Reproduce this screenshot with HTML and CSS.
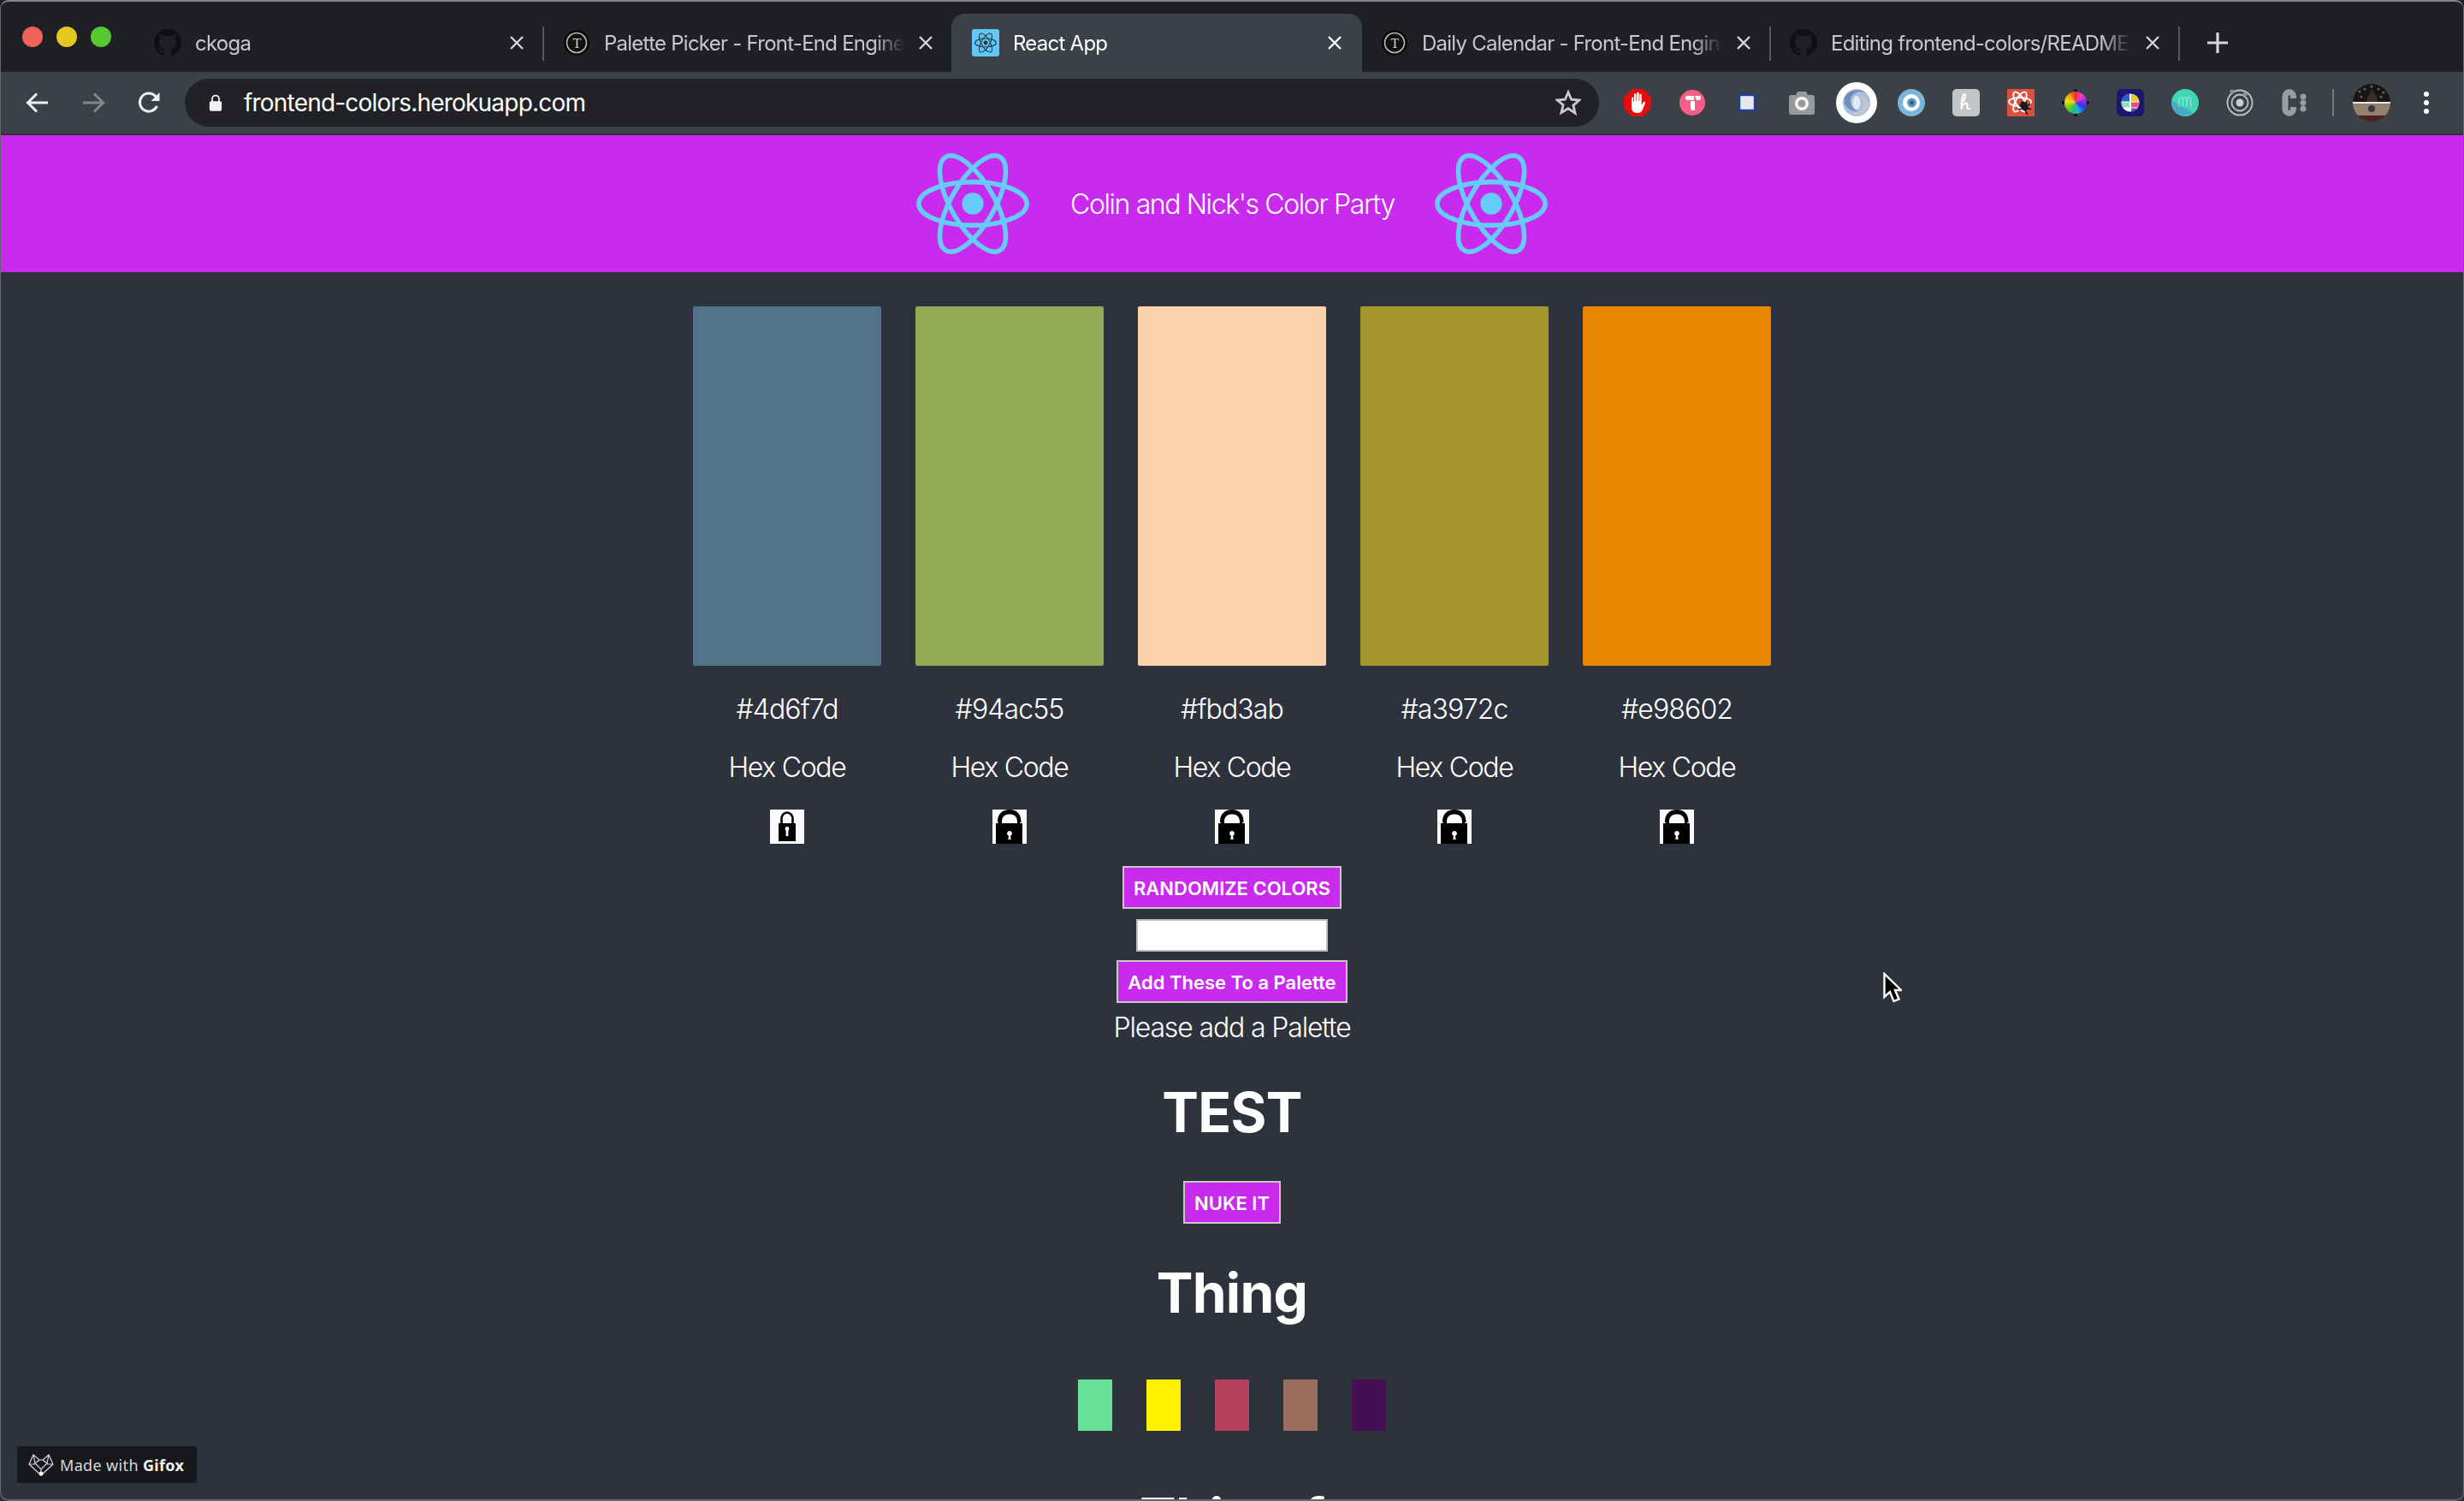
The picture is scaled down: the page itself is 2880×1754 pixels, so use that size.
FILE: index.html
```html
<!DOCTYPE html>
<html lang="en">
<head>
<meta charset="utf-8">
<title>React App</title>
<link rel="stylesheet" href="styles.css">
</head>
<body>
<svg class="defs" width="0" height="0" aria-hidden="true">
  <defs>
    <symbol id="react" viewBox="0 0 130 121">
      <g fill="none" stroke="currentColor" stroke-width="5.500">
        <ellipse cx="65" cy="60.500" rx="62.200" ry="25"/>
        <ellipse cx="65" cy="60.500" rx="62.200" ry="25" transform="rotate(60 65 60.500)"/>
        <ellipse cx="65" cy="60.500" rx="62.200" ry="25" transform="rotate(120 65 60.500)"/>
      </g>
      <circle cx="65" cy="60.500" r="12.500" fill="currentColor"/>
    </symbol>
    <symbol id="gh" viewBox="0 0 16 16">
      <path fill="#0f1012" d="M8 0C3.58 0 0 3.58 0 8c0 3.54 2.29 6.53 5.47 7.59.4.07.55-.17.55-.38 0-.19-.01-.82-.01-1.49-2.01.37-2.53-.49-2.69-.94-.09-.23-.48-.94-.82-1.13-.28-.15-.68-.52-.01-.53.63-.01 1.08.58 1.23.82.72 1.21 1.87.87 2.33.66.07-.52.28-.87.51-1.07-1.78-.2-3.64-.89-3.64-3.95 0-.87.31-1.59.82-2.15-.08-.2-.36-1.02.08-2.12 0 0 .67-.21 2.2.82.64-.18 1.32-.27 2-.27s1.36.09 2 .27c1.53-1.04 2.2-.82 2.2-.82.44 1.1.16 1.92.08 2.12.51.56.82 1.27.82 2.15 0 3.07-1.87 3.75-3.65 3.95.29.25.54.73.54 1.48 0 1.07-.01 1.93-.01 2.2 0 .21.15.46.55.38A8.01 8.01 0 0 0 16 8c0-4.42-3.58-8-8-8z"/>
    </symbol>
    <symbol id="fe" viewBox="0 0 32 32">
      <circle cx="16" cy="16" r="15" fill="#0a0a0a"/>
      <circle cx="16" cy="16" r="11.500" fill="#111" stroke="#bdbdbd" stroke-width="1.600"/>
      <text x="16" y="21.500" text-anchor="middle" class="fe-t">T</text>
    </symbol>
    <symbol id="x" viewBox="0 0 16 16">
      <path d="M1 1l14 14M15 1L1 15" fill="none" stroke="currentColor" stroke-width="2.400"/>
    </symbol>
    <symbol id="lock-closed" viewBox="0 0 40 40">
      <rect width="40" height="40" fill="#fbfbfb"/>
      <path d="M13.500 17V11a6.500 7.500 0 0 1 13 0v6" fill="none" stroke="#000" stroke-width="2.600"/>
      <rect x="10" y="16" width="20" height="21" fill="#000"/>
      <rect x="18.600" y="21" width="2.800" height="10" fill="#fff"/>
      <circle cx="20" cy="22.500" r="2.400" fill="#fff"/>
    </symbol>
    <symbol id="lock-open" viewBox="0 0 40 40">
      <rect width="40" height="40" fill="#fbfbfb"/>
      <path d="M6 18V14C6 5 12 0 20 0s13.500 5 13.500 14v4H29v-4c0-6-4-8.500-9-8.500S11 8 11 14v4z" fill="#000"/>
      <path d="M4 16h31v24H4z" fill="#000"/>
      <path d="M4 16h3v-1H4zM32 16h3v-1h-3z" fill="#fbfbfb"/>
      <path d="M18.300 35h3.400l-.7-4.300a2.900 2.900 0 1 0-2 0z" fill="#fff"/>
    </symbol>
  </defs>
</svg>

<div class="browser">
  <header class="tabstrip">
    <div class="lights">
      <span class="light light-red"></span>
      <span class="light light-yellow"></span>
      <span class="light light-green"></span>
    </div>
    <div class="tab divided">
      <svg class="favicon"><use href="#gh"/></svg>
      <span class="tab-title">ckoga</span>
      <svg class="close"><use href="#x"/></svg>
    </div>
    <div class="tab">
      <svg class="favicon"><use href="#fe"/></svg>
      <span class="tab-title">Palette Picker - Front-End Engine</span>
      <svg class="close"><use href="#x"/></svg>
    </div>
    <div class="tab active">
      <svg class="favicon react-fav" viewBox="0 0 32 32">
        <rect width="32" height="32" rx="3" fill="#61c8f5"/>
        <svg x="2" y="4" width="28" height="24" class="react-dark"><use href="#react"/></svg>
      </svg>
      <span class="tab-title">React App</span>
      <svg class="close"><use href="#x"/></svg>
    </div>
    <div class="tab divided">
      <svg class="favicon"><use href="#fe"/></svg>
      <span class="tab-title">Daily Calendar - Front-End Engine</span>
      <svg class="close"><use href="#x"/></svg>
    </div>
    <div class="tab divided">
      <svg class="favicon"><use href="#gh"/></svg>
      <span class="tab-title">Editing frontend-colors/README.md at master</span>
      <svg class="close"><use href="#x"/></svg>
    </div>
    <svg class="new-tab" viewBox="0 0 26 26"><path d="M13 1v24M1 13h24" fill="none" stroke="currentColor" stroke-width="3.200"/></svg>
  </header>

  <nav class="toolbar">
    <svg class="nav-icon" viewBox="0 0 28 28"><path d="M26 14H3M13 3.500L2.500 14 13 24.500" fill="none" stroke="currentColor" stroke-width="3"/></svg>
    <svg class="nav-icon nav-off" viewBox="0 0 28 28"><path d="M2 14h23M15 3.500L25.500 14 15 24.500" fill="none" stroke="currentColor" stroke-width="3"/></svg>
    <svg class="nav-icon" viewBox="0 0 28 28"><path d="M23.500 18a10.500 10.500 0 1 1-1.800-11.500L25 10" fill="none" stroke="currentColor" stroke-width="3"/><path d="M26.500 2v10h-10z" fill="currentColor"/></svg>
    <div class="omnibox">
      <svg class="url-lock" viewBox="0 0 18 24"><path d="M4.500 11V7a4.500 4.500 0 0 1 9 0v4" fill="none" stroke="currentColor" stroke-width="2"/><rect x="1" y="10" width="16" height="13" rx="2" fill="currentColor"/></svg>
      <span class="url">frontend-colors.herokuapp.com</span>
      <svg class="star" viewBox="0 0 28 28"><path d="M14 2.500l3.400 8 8.600.7-6.500 5.700 2 8.500L14 20.300l-7.500 4.600 2-8.500L2 11.200l8.600-.7z" fill="none" stroke="currentColor" stroke-width="2.600"/></svg>
    </div>
    <div class="extensions">
      <span class="ext">
        <svg viewBox="0 0 32 32" class="ext-32"><path d="M9.500 0h13L32 9.500v13L22.500 32h-13L0 22.500v-13z" fill="#e80c0c"/><path d="M9 10.500c0-1.500 2.300-1.500 2.300 0V15h.7V6.500c0-1.600 2.400-1.600 2.400 0V14h.7V5c0-1.600 2.500-1.600 2.500 0v9h.7V7c0-1.600 2.400-1.600 2.400 0v12l2-3.500c.9-1.300 2.800-.4 2.200 1L22 24c-1 2.500-3 4-6 4-4 0-7-2-7-6.500z" fill="#fff"/></svg>
      </span>
      <span class="ext">
        <svg viewBox="0 0 30 30" class="ext-30"><circle cx="15" cy="15" r="15" fill="#f55e88"/><path d="M7 9.500a2.500 2.500 0 0 1 2.500-2.500L17 7v5h-7.500A2.500 2.500 0 0 1 7 9.500zM13 13h5v11h-2a3 3 0 0 1-3-3zM18 7h5a2 2 0 0 1 2 2v1a2 2 0 0 1-2 2h-3z" fill="#fff"/></svg>
      </span>
      <span class="ext">
        <svg viewBox="0 0 32 32" class="ext-32"><rect x="7" y="7" width="18" height="18" fill="#e6e8ee" stroke="#1c3f9a" stroke-width="2.400"/><g fill="#1c4aa8"><rect x="7" y="0" width="2" height="2"/><rect x="23" y="0" width="2" height="2"/><rect x="0" y="7" width="2" height="2"/><rect x="30" y="7" width="2" height="2"/><rect x="0" y="23" width="2" height="2"/><rect x="30" y="23" width="2" height="2"/><rect x="7" y="30" width="2" height="2"/><rect x="23" y="30" width="2" height="2"/></g></svg>
      </span>
      <span class="ext">
        <svg viewBox="0 0 30 28" class="ext-cam"><path d="M3 5h5l2-4h10l2 4h5a3 3 0 0 1 3 3v17a3 3 0 0 1-3 3H3a3 3 0 0 1-3-3V8a3 3 0 0 1 3-3z" fill="#97999c"/><circle cx="15" cy="15" r="8" fill="#fff" opacity=".9"/><circle cx="15" cy="15" r="4.500" fill="#97999c"/></svg>
      </span>
      <span class="ext">
        <svg viewBox="0 0 48 48" class="ext-48"><circle cx="24" cy="24" r="24" fill="#fff"/><circle cx="24" cy="24" r="16" fill="#a9bedc"/><path d="M10 18c4-9 18-12 26-5-7-3-15-2-18 4-3 7 0 14 8 17-8 1-19-6-16-16z" fill="#6d8dbb"/><path d="M38 30c-4 9-16 11-22 5 7 2 13 0 15-6 2-7-1-11-6-14 7 0 16 6 13 15z" fill="#bfc6cf"/><ellipse cx="24" cy="24" rx="4.500" ry="8" fill="#e4eaf3"/></svg>
      </span>
      <span class="ext">
        <svg viewBox="0 0 32 32" class="ext-32"><circle cx="16" cy="16" r="16" fill="#7eb3d9"/><circle cx="16" cy="16" r="10" fill="#fff"/><circle cx="16.500" cy="16" r="5.500" fill="#5d9cc4"/><circle cx="16.500" cy="16" r="2.500" fill="#2f5f85"/></svg>
      </span>
      <span class="ext">
        <svg viewBox="0 0 32 32" class="ext-32"><rect width="32" height="32" rx="5" fill="#c2c4c6"/><path d="M9.500 18c3-3 6-8 5.500-11-.4-2-2.500-1-3 1.500-.8 4-1 9-1.500 15 1-4 3-7 5.500-7 2 0 1.500 2.500 1.300 4.500-.2 2 .7 3.500 4.200 1.500" fill="none" stroke="#fff" stroke-width="2"/></svg>
      </span>
      <span class="ext">
        <svg viewBox="0 0 32 32" class="ext-32"><rect width="32" height="32" fill="#dc4f3e"/><g fill="none" stroke="#fff" stroke-width="1.800"><ellipse cx="15" cy="15" rx="13" ry="5"/><ellipse cx="15" cy="15" rx="13" ry="5" transform="rotate(60 15 15)"/><ellipse cx="15" cy="15" rx="13" ry="5" transform="rotate(120 15 15)"/></g><ellipse cx="20" cy="20" rx="4" ry="6" fill="#1a1a1a" transform="rotate(-30 20 20)"/><path d="M14 19l4 2M13 24l5-1M22 14l1 4M27 17l-4 3M28 24l-5-2M24 30l-3-5" stroke="#1a1a1a" stroke-width="1.600"/></svg>
      </span>
      <span class="ext">
        <span class="ext-wheel"></span>
      </span>
      <span class="ext">
        <svg viewBox="0 0 32 32" class="ext-32"><rect width="32" height="32" rx="6" fill="#1c1670"/><circle cx="16" cy="16" r="10.500" fill="#fff"/><path d="M16 5.500a10.500 10.500 0 0 1 10.500 9H17v-9z" fill="#e8c926"/><path d="M15 5.500a10.500 10.500 0 0 0-9.500 9H15z" fill="#2e5fc2"/><path d="M5.500 15.500H15v6H7a10.500 10.500 0 0 1-1.500-6z" fill="#8be0b4"/><path d="M17 15.500h9.500a10.500 10.500 0 0 1-1.500 6h-8z" fill="#ef4e7e"/><path d="M17 22.500h7.500a10.500 10.500 0 0 1-7.500 4z" fill="#5a4fb8"/></svg>
      </span>
      <span class="ext">
        <svg viewBox="0 0 32 32" class="ext-32"><circle cx="16" cy="16" r="16" fill="#40d6b5"/><path d="M0 13l25 15a16 16 0 0 1-25-12z" fill="#4aa6c4"/><path d="M9 21v-9c0-3 4.500-3 4.500 0v8-8c0-3 4.500-3 4.500 0v8-8c0-3 4.500-3 4.500 0v9" fill="none" stroke="#a8e8e0" stroke-width=".9"/></svg>
      </span>
      <span class="ext">
        <svg viewBox="0 0 32 32" class="ext-32"><g fill="none" stroke="#bfc1c4" stroke-width="1.800"><circle cx="16" cy="16" r="14.500"/><circle cx="16" cy="16" r="9.500"/></g><circle cx="16" cy="16" r="4.500" fill="#c9cbce"/><circle cx="7" cy="3" r="2.600" fill="#8a8c90"/><circle cx="22" cy="6" r="2.600" fill="#8a8c90"/></svg>
      </span>
      <span class="ext ext-c">
        <svg viewBox="0 0 30 32" class="ext-cwide"><path d="M13.500 11V8.500a4.750 4.750 0 0 0-9.500 0v15a4.750 4.750 0 0 0 9.500 0V21" fill="none" stroke="#9a9c9f" stroke-width="7"/><circle cx="25" cy="9" r="3.500" fill="#9a9c9f"/><circle cx="25" cy="16" r="3.500" fill="#9a9c9f"/><circle cx="25" cy="23" r="3.500" fill="#9a9c9f"/></svg>
      </span>
    </div>
    <span class="tool-divider"></span>
    <svg class="avatar" viewBox="0 0 44 44">
      <defs><clipPath id="av"><circle cx="22" cy="22" r="22"/></clipPath></defs>
      <g clip-path="url(#av)">
        <rect width="44" height="21" fill="#171515"/>
        <g fill="#6b6055"><circle cx="8" cy="9" r="1.500"/><circle cx="14" cy="6" r="1.500"/><circle cx="30" cy="6" r="1.500"/><circle cx="36" cy="10" r="1.500"/><circle cx="10" cy="15" r="1.500"/><circle cx="33" cy="15" r="1.500"/><circle cx="22" cy="3" r="1.500"/></g>
        <path d="M16 21c0-6 3-8 4-9 0-3 1-5 2.500-5S25 9 25 12c2 1 4 3 4 9z" fill="#3c2c28"/>
        <rect y="21" width="44" height="2" fill="#e7e7e7"/>
        <rect y="23" width="44" height="14" fill="#92806f"/>
        <rect y="37" width="44" height="7" fill="#4c1f20"/>
        <circle cx="22" cy="29" r="4" fill="#3a3a3a"/>
      </g>
    </svg>
    <svg class="menu-dots" viewBox="0 0 6 26"><circle cx="3" cy="3" r="3"/><circle cx="3" cy="13" r="3"/><circle cx="3" cy="23" r="3"/></svg>
  </nav>

  <div class="page">
    <section class="banner">
      <svg class="banner-logo"><use href="#react"/></svg>
      <span class="banner-title">Colin and Nick's Color Party</span>
      <svg class="banner-logo"><use href="#react"/></svg>
    </section>

    <main class="content">
      <div class="swatches">
        <div class="col">
          <div class="swatch s-1"></div>
          <p class="hex">#4d6f7d</p>
          <p class="hex-label">Hex Code</p>
          <svg class="lock"><use href="#lock-closed"/></svg>
        </div>
        <div class="col">
          <div class="swatch s-2"></div>
          <p class="hex">#94ac55</p>
          <p class="hex-label">Hex Code</p>
          <svg class="lock"><use href="#lock-open"/></svg>
        </div>
        <div class="col">
          <div class="swatch s-3"></div>
          <p class="hex">#fbd3ab</p>
          <p class="hex-label">Hex Code</p>
          <svg class="lock"><use href="#lock-open"/></svg>
        </div>
        <div class="col">
          <div class="swatch s-4"></div>
          <p class="hex">#a3972c</p>
          <p class="hex-label">Hex Code</p>
          <svg class="lock"><use href="#lock-open"/></svg>
        </div>
        <div class="col">
          <div class="swatch s-5"></div>
          <p class="hex">#e98602</p>
          <p class="hex-label">Hex Code</p>
          <svg class="lock"><use href="#lock-open"/></svg>
        </div>
      </div>

      <button class="btn btn-randomize">RANDOMIZE COLORS</button>
      <input class="name-input" type="text" aria-label="Palette name">
      <button class="btn btn-add">Add These To a Palette</button>
      <p class="please">Please add a Palette</p>

      <h2 class="project project-test">TEST</h2>
      <button class="btn btn-nuke">NUKE IT</button>
      <h2 class="project project-thing">Thing</h2>
      <div class="mini-row">
        <span class="mini m-1"></span>
        <span class="mini m-2"></span>
        <span class="mini m-3"></span>
        <span class="mini m-4"></span>
        <span class="mini m-5"></span>
      </div>
      <h2 class="project project-next">Thing f</h2>
    </main>
  </div>

  <div class="gifox">
    <svg class="gifox-icon" viewBox="0 0 30 26"><g fill="none" stroke="#d9d9d9" stroke-width="1.200"><path d="M1 12L6 1l7 6h4l7-6 5 11-14 13z"/><path d="M6 1l2 10 7 7 7-7 2-10M1 12h7M29 12h-7M8 11l5-4M22 11l-5-4M15 18v7"/></g><circle cx="15" cy="23" r="2.500" fill="#fff"/></svg>
    <span class="gifox-text">Made with <b>Gifox</b></span>
  </div>

  <svg class="cursor" viewBox="0 0 22 36"><path d="M1.500 1.500v27l6.500-6 4.500 11 6-2.500-4.500-10.500H21z" fill="#000" stroke="#fff" stroke-width="2.400"/></svg>
</div>
</body>
</html>
```

FILE: styles.css
```css
* { box-sizing: border-box; }

html, body {
  margin: 0;
  padding: 0;
  width: 2880px;
  height: 1754px;
  overflow: hidden;
  background: #2e323c;
  font-family: "Inter", "Liberation Sans", sans-serif;
}

.defs { position: absolute; }

.browser {
  position: relative;
  width: 2880px;
  height: 1754px;
  display: flex;
  flex-direction: column;
  overflow: hidden;
  background: #2e323c;
}

.browser::after {
  content: "";
  position: absolute;
  inset: 0;
  border: 1px solid #66686c;
  border-top: 2px solid #85868a;
  border-bottom: 2px solid #66686c;
  border-radius: 10px;
  pointer-events: none;
}

/* Tab strip */
.tabstrip {
  height: 84px;
  flex: none;
  background: #1f2024;
  display: flex;
  align-items: flex-end;
}

.lights {
  width: 156px;
  flex: none;
  align-self: stretch;
  display: flex;
  gap: 16px;
  padding: 31px 0 0 26px;
}

.light {
  width: 24px;
  height: 24px;
  border-radius: 50%;
}
.light-red { background: #ef6159; }
.light-yellow { background: #e6c920; }
.light-green { background: #55c92f; }

.tab {
  position: relative;
  width: 480px;
  height: 68px;
  flex: none;
  margin-right: -2px;
  padding-left: 24px;
  display: flex;
  align-items: center;
  color: #c7c8ca;
  font-size: 24px;
  letter-spacing: -0.75px;
}

.tab.divided::after {
  content: "";
  position: absolute;
  left: 478px;
  top: 15px;
  width: 2px;
  height: 40px;
  background: #57585c;
}

.tab.active {
  background: #3c4047;
  border-radius: 16px 16px 0 0;
  color: #fff;
  z-index: 1;
}

.favicon {
  width: 32px;
  height: 32px;
  flex: none;
}

.react-dark { color: #1f3747; }

.tab-title {
  width: 351px;
  margin-left: 16px;
  flex: none;
  white-space: nowrap;
  overflow: hidden;
  -webkit-mask-image: linear-gradient(to right, #000 90%, transparent 100%);
  mask-image: linear-gradient(to right, #000 90%, transparent 100%);
}

.close {
  width: 16px;
  height: 16px;
  margin-left: 17px;
  flex: none;
  color: #d4d5d7;
}
.tab.active .close { color: #fff; }

.fe-t {
  font-family: "Liberation Serif", serif;
  font-size: 16px;
  fill: #cfcfcf;
}

.new-tab {
  width: 26px;
  height: 26px;
  margin: 0 0 21px 33px;
  flex: none;
  color: #d6d7d9;
}

/* Toolbar */
.toolbar {
  height: 74px;
  flex: none;
  background: #3c4047;
  border-bottom: 2px solid #2d2f35;
  display: flex;
  align-items: center;
  padding-left: 30px;
  color: #eef0f2;
}

.nav-icon {
  width: 28px;
  height: 28px;
  flex: none;
  margin-right: 37px;
}
.nav-off { color: #85878b; }

.omnibox {
  width: 1653px;
  height: 56px;
  margin-left: -9px;
  flex: none;
  display: flex;
  align-items: center;
  padding: 0 21px 0 28px;
  border-radius: 28px;
  background: #202226;
  color: #fff;
}

.url-lock {
  width: 16px;
  height: 22px;
  flex: none;
  color: #f2f2f2;
}

.url {
  flex: 1;
  margin-left: 25px;
  font-size: 28px;
  letter-spacing: -0.8px;
}

.star {
  width: 30px;
  height: 30px;
  flex: none;
  color: #c9cacc;
}

.extensions {
  display: flex;
  margin-left: 13px;
  flex: none;
}

.ext {
  width: 64px;
  height: 48px;
  display: flex;
  align-items: center;
  justify-content: center;
}

.ext-32 { width: 32px; height: 32px; }
.ext-30 { width: 30px; height: 30px; }
.ext-48 { width: 48px; height: 48px; }
.ext-cam { width: 30px; height: 28px; }
.ext-cwide { width: 30px; height: 32px; }

.ext-wheel {
  width: 26px;
  height: 26px;
  border-radius: 50%;
  background: conic-gradient(#ef2a2a, #ef3fd0, #8a2be2, #1f3fe8, #20a8e8, #22c46a, #7ccc1a, #f0e010, #f59a10, #ef2a2a);
  box-shadow: 0 -14px 0 -11px #111, 0 14px 0 -11px #111, 14px 0 0 -11px #111, -14px 0 0 -11px #111;
}

.tool-divider {
  width: 2px;
  height: 32px;
  flex: none;
  margin-left: 12px;
  background: #77797d;
}

.avatar {
  width: 44px;
  height: 44px;
  flex: none;
  margin-left: 22px;
}

.menu-dots {
  width: 6px;
  height: 26px;
  flex: none;
  margin-left: 39px;
  fill: #fff;
}

/* Page */
.page {
  flex: 1;
  min-height: 0;
  overflow: hidden;
}

.banner {
  height: 160px;
  background: #c82bee;
  display: flex;
  align-items: center;
  justify-content: center;
  gap: 48px;
  color: #fff;
  font-size: 32px;
  font-weight: 300;
  letter-spacing: -1.4px;
}

.banner-logo {
  width: 132px;
  height: 124px;
  flex: none;
  color: #67cbf8;
}

.banner-title { width: 378px; text-align: center; white-space: nowrap; }

.content {
  display: flex;
  flex-direction: column;
  align-items: center;
  color: #fff;
}

.swatches {
  display: flex;
  gap: 40px;
  padding-top: 40px;
}

.col {
  width: 220px;
  display: flex;
  flex-direction: column;
  align-items: center;
}

.swatch {
  width: 220px;
  height: 420px;
  border-radius: 2px;
}
.s-1 { background: #527388; }
.s-2 { background: #94ac55; }
.s-3 { background: #fbd3ab; }
.s-4 { background: #a3972c; }
.s-5 { background: #e98602; }

.hex, .hex-label {
  font-size: 32px;
  line-height: 38px;
  font-weight: 300;
  white-space: nowrap;
}
.hex { margin: 32px 0 0; letter-spacing: -0.9px; }
.hex-label { margin: 30px 0 0; letter-spacing: -1.3px; }

.lock {
  width: 40px;
  height: 40px;
  margin-top: 30px;
  flex: none;
}

.btn {
  display: block;
  height: 50px;
  padding: 2px 11px 0;
  background: #c82bee;
  border: 2px solid #c8c8c8;
  color: #fff;
  font-family: inherit;
  font-size: 22px;
  font-weight: 600;
  white-space: nowrap;
}

.btn-randomize { margin-top: 26px; }
.btn-add { margin-top: 10px; }
.btn-nuke { margin-top: 40px; }

.name-input {
  display: block;
  width: 224px;
  height: 38px;
  margin: 12px 0 0;
  padding: 0;
  background: #fff;
  border: 2px solid #bcbcbc;
}

.please {
  margin: 10px 0 0;
  font-size: 32px;
  line-height: 38px;
  font-weight: 300;
  letter-spacing: -1.15px;
}

.project {
  margin: 41px 0 0;
  font-size: 64px;
  line-height: 80px;
  font-weight: 700;
  letter-spacing: -0.7px;
}

.project-test { margin-top: 40px; }

.mini-row {
  display: flex;
  gap: 40px;
  margin-top: 61px;
}

.mini {
  width: 40px;
  height: 60px;
  border-radius: 1px;
}
.m-1 { background: #68e09a; }
.m-2 { background: #fcf200; }
.m-3 { background: #b5405f; }
.m-4 { background: #9a6d5e; }
.m-5 { background: #440d56; }

.project-next { margin-top: 62px; }

/* Overlays */
.gifox {
  position: absolute;
  left: 20px;
  top: 1690px;
  width: 210px;
  height: 43px;
  padding-left: 13px;
  display: flex;
  align-items: center;
  gap: 7px;
  background: #17181c;
  border-radius: 3px;
  color: #d7d7d8;
  font-family: "Noto Sans", sans-serif;
  font-size: 18px;
  letter-spacing: 0.35px;
}
.gifox-icon { width: 30px; height: 26px; flex: none; }
.gifox-text { white-space: nowrap; }
.gifox-text b { color: #f2f2f2; }

.cursor {
  position: absolute;
  left: 2201px;
  top: 1136px;
  width: 22px;
  height: 37px;
}
```
